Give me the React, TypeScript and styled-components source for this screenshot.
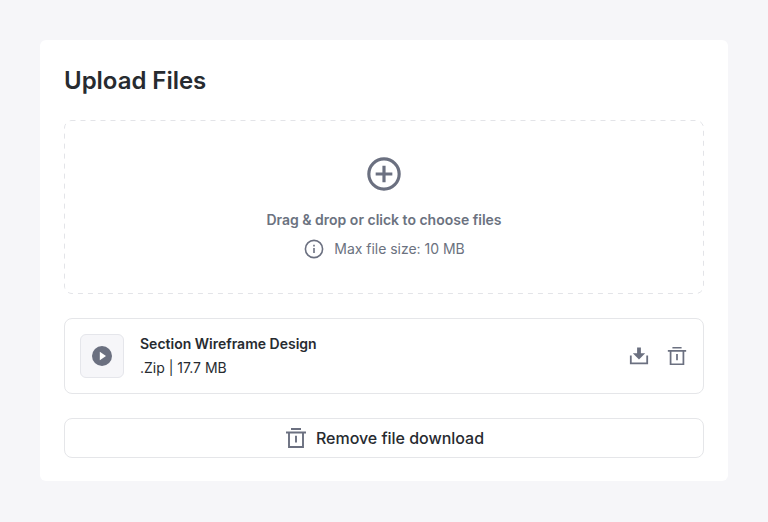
import React from "react";
import styled, { createGlobalStyle } from "styled-components";

const GlobalStyle = createGlobalStyle`
  * { box-sizing: border-box; }
  body { margin: 0; background: #f6f6f9; font-family: Inter, "Liberation Sans", sans-serif; color: #272b30; }
`;

const Page = styled.main`
  min-height: 522px;
  padding: 40px;
`;

const Card = styled.section`
  height: 441px;
  padding: 24px;
  border-radius: 6px;
  background: #fff;
  display: flex;
  flex-direction: column;
  gap: 24px;
`;

const Title = styled.h1`
  margin: 0;
  height: 32px;
  flex: none;
  font-size: 24px;
  line-height: 33px;
  font-weight: 600;
  letter-spacing: -0.03px;
`;

const DropZone = styled.div`
  position: relative;
  flex: none;
  height: 174px;
  padding-top: 34px;
  display: flex;
  flex-direction: column;
  align-items: center;
  color: #6b7280;
  font-size: 14px;
  line-height: 20px;
`;

const DashedOutline = styled.svg`
  position: absolute;
  inset: 0;
  width: 100%;
  height: 100%;
  pointer-events: none;
`;

const Prompt = styled.div`
  margin-top: 16px;
  font-weight: 600;
`;

const Hint = styled.div`
  margin-top: 7px;
  margin-right: 1px;
  display: flex;
  align-items: center;
  gap: 8px;
  height: 24px;
  letter-spacing: -0.02px;
`;

const FileRow = styled.div`
  flex: none;
  height: 76px;
  padding: 15px;
  border: 1px solid #e5e6e9;
  border-radius: 8px;
  display: flex;
  align-items: center;
`;

const Thumb = styled.div`
  width: 44px;
  height: 44px;
  border: 1px solid #e5e6eb;
  border-radius: 6px;
  background: #f6f6f9;
  display: grid;
  place-items: center;
`;

const FileInfo = styled.div`
  flex: 1;
  margin-left: 16px;
  font-size: 14px;
  line-height: 24px;
`;

const FileName = styled.div`
  font-weight: 600;
`;

const Actions = styled.div`
  display: flex;
  gap: 14px;
  margin-right: -1px;
`;

const IconButton = styled.button`
  border: 0;
  padding: 0;
  background: none;
  width: 24px;
  height: 24px;
  display: grid;
  place-items: center;
`;

const RemoveButton = styled.button`
  flex: none;
  height: 40px;
  padding: 0;
  border: 1px solid #e5e6e9;
  border-radius: 8px;
  background: #fff;
  display: flex;
  align-items: center;
  justify-content: center;
  gap: 8px;
  color: #272b30;
  font: 500 16px/24px Inter, "Liberation Sans", sans-serif;
  letter-spacing: -0.02px;
`;

const Icon = styled.svg<{ $size?: number }>`
  display: block;
  flex: none;
  width: ${(p) => p.$size ?? 24}px;
  height: ${(p) => p.$size ?? 24}px;
  color: #6b7080;
`;

const TrashIcon = ({ size = 24 }: { size?: number }) => (
  <Icon $size={size} viewBox="0 0 24 24" fill="none" stroke="currentColor" strokeWidth="1.9">
    <path d="M7 3h10M2 6.5h20M5 6.5V21h14V6.5M12 9.8v6.7" />
  </Icon>
);

export default function App() {
  return (
    <>
      <GlobalStyle />
      <Page>
        <Card>
          <Title>Upload Files</Title>
          <DropZone>
            <DashedOutline aria-hidden="true">
              <rect x="0.5" y="0.5" width="639" height="173" rx="7.5" fill="none" stroke="#e3e4e8" strokeDasharray="5 5" strokeDashoffset="1.5" />
            </DashedOutline>
            <Icon $size={40} viewBox="0 0 24 24" fill="none" stroke="currentColor" strokeWidth="1.9">
              <circle cx="12" cy="12" r="9.1" />
              <path d="M12 7v10M7 12h10" />
            </Icon>
            <Prompt>Drag &amp; drop or click to choose files</Prompt>
            <Hint>
              <Icon viewBox="0 0 24 24" fill="none" stroke="currentColor" strokeWidth="1.6">
                <circle cx="12" cy="12" r="8.6" />
                <path d="M12 11v5M12 7.7v1.7" />
              </Icon>
              Max file size: 10 MB
            </Hint>
          </DropZone>
          <FileRow>
            <Thumb>
              <Icon viewBox="0 0 24 24">
                <circle cx="12" cy="12" r="10" fill="currentColor" />
                <path d="M9.8 7.8v8.4l6.2-4.2z" fill="#fff" />
              </Icon>
            </Thumb>
            <FileInfo>
              <FileName>Section Wireframe Design</FileName>
              <div>.Zip | 17.7 MB</div>
            </FileInfo>
            <Actions>
              <IconButton aria-label="Download">
                <Icon viewBox="0 0 24 24">
                  <path d="M3.8 11.5v7.8h16.4v-7.8" fill="none" stroke="currentColor" strokeWidth="1.8" />
                  <path d="M10.1 3.6h3.8v5.6h4.3L12 15.6 5.8 9.2h4.3z" fill="currentColor" />
                </Icon>
              </IconButton>
              <IconButton aria-label="Delete">
                <TrashIcon size={22} />
              </IconButton>
            </Actions>
          </FileRow>
          <RemoveButton>
            <TrashIcon />
            Remove file download
          </RemoveButton>
        </Card>
      </Page>
    </>
  );
}
